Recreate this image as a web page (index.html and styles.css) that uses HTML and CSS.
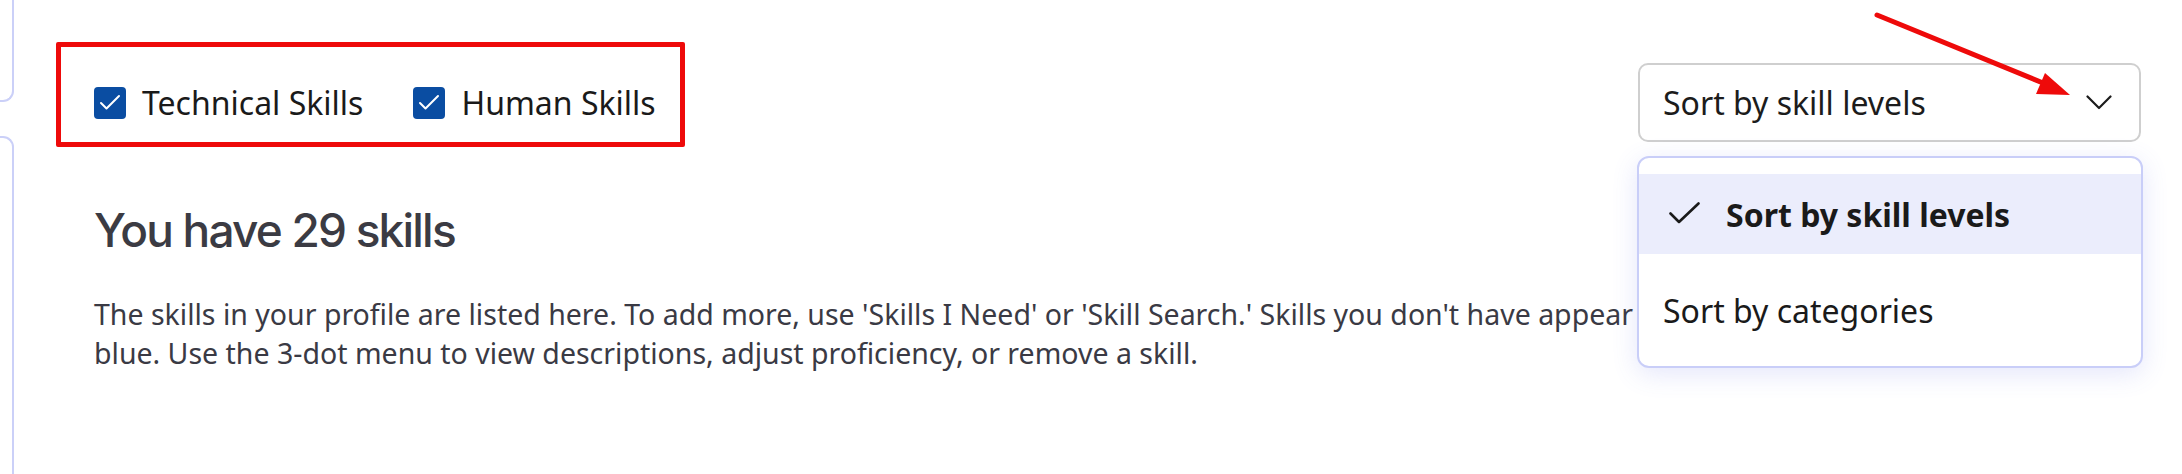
FILE: index.html
```html
<!DOCTYPE html>
<html>
<head>
    <title>My Skills</title>
    <link rel="stylesheet" href="styles.css">
</head>
<body>
    <div class="page">
        <aside class="rail">
            <div class="rail-card rail-card-top"></div>
            <div class="rail-card rail-card-bottom"></div>
        </aside>

        <main class="content">
            <div class="toolbar">
                <div class="filters">
                    <label class="check">
                        <span class="check-box">
                            <svg width="32" height="32" viewBox="0 0 32 32"><path d="M7 16 L12.5 21.5 L25 9" fill="none" stroke="#fff" stroke-width="2" stroke-linecap="round" stroke-linejoin="round"/></svg>
                        </span>
                        Technical Skills
                    </label>
                    <label class="check">
                        <span class="check-box">
                            <svg width="32" height="32" viewBox="0 0 32 32"><path d="M7 16 L12.5 21.5 L25 9" fill="none" stroke="#fff" stroke-width="2" stroke-linecap="round" stroke-linejoin="round"/></svg>
                        </span>
                        Human Skills
                    </label>
                    <!-- annotation -->
                    <div class="mark-box"></div>
                </div>

                <div class="sort">
                    <button class="sort-button">
                        <span>Sort by skill levels</span>
                        <svg width="26" height="15" viewBox="0 0 26 15"><path d="M1.5 1.5 L13 13 L24.5 1.5" fill="none" stroke="#1c1c1c" stroke-width="2.2" stroke-linecap="round" stroke-linejoin="round"/></svg>
                    </button>
                    <ul class="sort-menu">
                        <li class="sort-option selected">
                            <svg width="32" height="24" viewBox="0 0 32 24"><path d="M1.5 11.5 L10 20 L29.5 1.5" fill="none" stroke="#1a1a1a" stroke-width="2.6" stroke-linecap="round" stroke-linejoin="round"/></svg>
                            Sort by skill levels
                        </li>
                        <li class="sort-option">Sort by categories</li>
                    </ul>
                </div>
            </div>

            <h1 class="title">You have 29 skills</h1>
            <p class="intro">The skills in your profile are listed here. To add more, use 'Skills I Need' or 'Skill Search.' Skills you don't have appear in blue. Use the 3-dot menu to view descriptions, adjust proficiency, or remove a skill.</p>
        </main>
    </div>

    <!-- annotation arrow -->
    <svg class="mark-arrow" width="230" height="110" viewBox="1860 0 230 110">
        <line x1="1877" y1="15" x2="2048" y2="85" stroke="#ee0a0a" stroke-width="5" stroke-linecap="round"/>
        <polygon points="2070,95 2045,73 2036,94" fill="#ee0a0a"/>
    </svg>
</body>
</html>
```

FILE: styles.css
```css
body {
    margin: 0;
    background-color: #fff;
    color: #1a1a1a;
    font-family: 'Noto Sans', 'Open Sans', sans-serif;
    overflow: hidden;
}

.page {
    display: flex;
    min-height: 100vh;
}

.rail {
    width: 14px;
    display: flex;
    flex-direction: column;
    gap: 34px;
}

.rail-card {
    border: 2px solid #cbd0f8;
    border-left: none;
    box-sizing: border-box;
}

.rail-card-top {
    height: 102px;
    border-top: none;
    border-radius: 0 0 11px 0;
}

.rail-card-bottom {
    flex: 1;
    border-bottom: none;
    border-radius: 0 11px 0 0;
}

.content {
    flex: 1;
    padding: 63px 41px 0 80px;
}

.toolbar {
    display: flex;
    justify-content: space-between;
    align-items: center;
}

.filters {
    position: relative;
    display: flex;
    align-items: center;
    gap: 50px;
    align-self: stretch;
}

.check {
    display: flex;
    align-items: center;
    gap: 16px;
    font-size: 32px;
    color: #1a1a1a;
}

.check-box {
    width: 32px;
    height: 32px;
    border-radius: 4px;
    background-color: #0a4da2;
    display: flex;
}

.mark-box {
    position: absolute;
    left: -38px;
    top: -21px;
    right: -29px;
    bottom: -5px;
    border: 5px solid #ee0a0a;
    border-radius: 2px;
}

.sort {
    position: relative;
    width: 503px;
}

.sort-button {
    width: 100%;
    height: 79px;
    display: flex;
    align-items: center;
    justify-content: space-between;
    padding: 0 27px 0 23px;
    background-color: #fff;
    border: 2px solid #cfcfcf;
    border-radius: 10px;
    font-family: inherit;
    font-size: 32px;
    color: #1c1c1c;
}

.sort-menu {
    position: absolute;
    top: calc(100% + 14px);
    left: -1px;
    right: -2px;
    margin: 0;
    padding: 16px 0 0;
    list-style: none;
    background-color: #fff;
    border: 2px solid #c9cef8;
    border-radius: 12px;
    box-shadow: 0 6px 26px rgba(90, 100, 230, 0.16);
    overflow: hidden;
}

.sort-option {
    display: flex;
    align-items: center;
    gap: 25px;
    height: 80px;
    padding: 0 24px;
    font-size: 32px;
    color: #1a1a1a;
}

.sort-option.selected {
    background-color: #ebedfc;
    font-weight: 700;
    padding-left: 30px;
}

.sort-option + .sort-option {
    height: 112px;
}

.title {
    margin: 60px 0 0;
    font-family: 'Inter', sans-serif;
    font-size: 46px;
    font-weight: 500;
    letter-spacing: -1.8px;
    line-height: 56px;
    color: #3b3b43;
}

.intro {
    max-width: 1610px;
    margin: 37px 0 0;
    font-size: 28.5px;
    line-height: 39px;
    color: #3a3a44;
}

.mark-arrow {
    position: absolute;
    left: 1860px;
    top: 0;
}
```
